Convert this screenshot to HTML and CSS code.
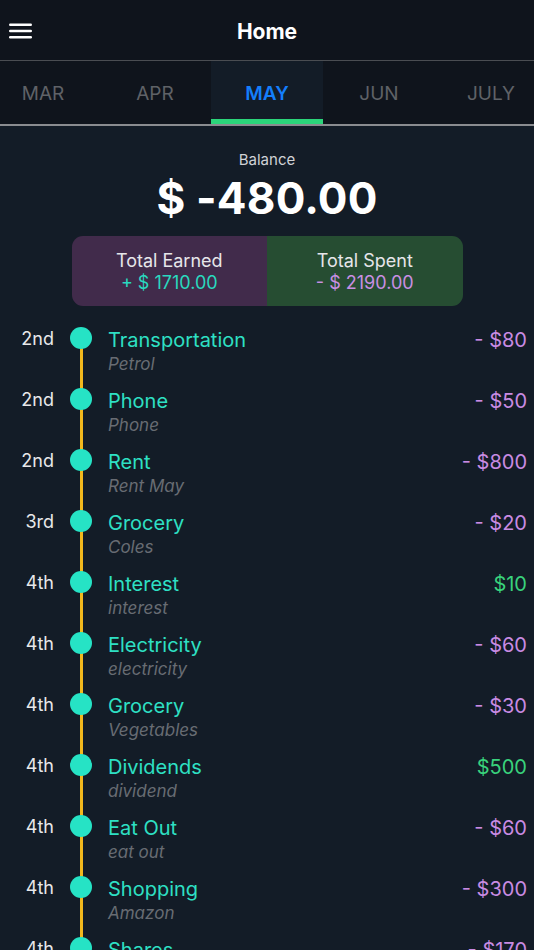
FILE: index.html
```html
<!DOCTYPE html>
<html>
<head>
<meta charset="utf-8">
<link rel="stylesheet" href="styles.css">
</head>
<body>
<div class="app">
  <header class="topbar">
    <svg class="menu" width="24" height="18" viewBox="0 0 24 18"><rect x="0" y="1.5" width="23" height="2.4" rx="1.2" fill="#fff"/><rect x="0" y="7.8" width="23" height="2.4" rx="1.2" fill="#fff"/><rect x="0" y="14.1" width="23" height="2.4" rx="1.2" fill="#fff"/></svg>
    <div class="title">Home</div>
  </header>
  <nav class="tabs">
    <div class="tab">MAR</div>
    <div class="tab">APR</div>
    <div class="tab active">MAY</div>
    <div class="tab">JUN</div>
    <div class="tab">JULY</div>
  </nav>
  <section class="summary">
    <div class="bal-label">Balance</div>
    <div class="bal-value">$ -480.00</div>
    <div class="totals">
      <div class="tot earned"><div class="tot-label">Total Earned</div><div class="tot-val">+ $ 1710.00</div></div>
      <div class="tot spent"><div class="tot-label">Total Spent</div><div class="tot-val">- $ 2190.00</div></div>
    </div>
  </section>
  <ul class="list">
    <li class="row first"><span class="date">2nd</span><span class="mark"><i></i></span><div class="info"><div class="name">Transportation</div><div class="sub">Petrol</div></div><span class="amt out">- $80</span></li>
    <li class="row"><span class="date">2nd</span><span class="mark"><i></i></span><div class="info"><div class="name">Phone</div><div class="sub">Phone</div></div><span class="amt out">- $50</span></li>
    <li class="row"><span class="date">2nd</span><span class="mark"><i></i></span><div class="info"><div class="name">Rent</div><div class="sub">Rent May</div></div><span class="amt out">- $800</span></li>
    <li class="row"><span class="date">3rd</span><span class="mark"><i></i></span><div class="info"><div class="name">Grocery</div><div class="sub">Coles</div></div><span class="amt out">- $20</span></li>
    <li class="row"><span class="date">4th</span><span class="mark"><i></i></span><div class="info"><div class="name">Interest</div><div class="sub">interest</div></div><span class="amt in">$10</span></li>
    <li class="row"><span class="date">4th</span><span class="mark"><i></i></span><div class="info"><div class="name">Electricity</div><div class="sub">electricity</div></div><span class="amt out">- $60</span></li>
    <li class="row"><span class="date">4th</span><span class="mark"><i></i></span><div class="info"><div class="name">Grocery</div><div class="sub">Vegetables</div></div><span class="amt out">- $30</span></li>
    <li class="row"><span class="date">4th</span><span class="mark"><i></i></span><div class="info"><div class="name">Dividends</div><div class="sub">dividend</div></div><span class="amt in">$500</span></li>
    <li class="row"><span class="date">4th</span><span class="mark"><i></i></span><div class="info"><div class="name">Eat Out</div><div class="sub">eat out</div></div><span class="amt out">- $60</span></li>
    <li class="row"><span class="date">4th</span><span class="mark"><i></i></span><div class="info"><div class="name">Shopping</div><div class="sub">Amazon</div></div><span class="amt out">- $300</span></li>
    <li class="row"><span class="date">4th</span><span class="mark"><i></i></span><div class="info"><div class="name">Shares</div><div class="sub">shares</div></div><span class="amt out">- $170</span></li>
  </ul>
</div>
</body>
</html>
```
FILE: styles.css
```css
* { box-sizing: border-box; margin: 0; padding: 0; }
html, body { background: #131c27; }
body { font-family: Inter, "Noto Sans", sans-serif; color: #fff; width: 534px; height: 950px; overflow: hidden; }
.app { width: 534px; }
.topbar { height: 61px; background: #0f141c; border-bottom: 1px solid #4a4d52; display: flex; align-items: center; justify-content: center; position: relative; }
.menu { position: absolute; left: 9px; top: 22px; }
.title { font-size: 21px; font-weight: 700; color: #fff; letter-spacing: 0; margin-top: 2px; }
.tabs { height: 65px; background: #0f141c; border-bottom: 2px solid #8a8c90; display: flex; justify-content: center; overflow: hidden; }
.tab { flex: 0 0 112px; height: 63px; display: flex; align-items: center; justify-content: center; font-size: 19px; color: #5f6267; padding-top: 1px; }
.tab.active { background: #131c27; color: #147efb; font-weight: 600; border-bottom: 5px solid #2bd57a; padding-top: 6px; height: 63px; }
.summary { display: flex; flex-direction: column; align-items: center; padding-top: 25px; }
.bal-label { font-size: 15px; color: #d0d2d6; line-height: 18px; }
.bal-value { font-size: 44px; font-weight: 700; line-height: 54px; margin-top: 2px; letter-spacing: 0.2px; }
.totals { display: flex; width: 391px; height: 70px; border-radius: 11px; overflow: hidden; margin-top: 11px; }
.tot { flex: 1; display: flex; flex-direction: column; align-items: center; justify-content: center; padding-top: 1px; }
.earned { background: #412b4b; }
.spent { background: #264d32; }
.tot-label { font-size: 18px; color: #e6e6ea; line-height: 22px; }
.tot-val { font-size: 18px; line-height: 22px; }
.earned .tot-val { color: #29d9bf; }
.spent .tot-val { color: #c98fe3; }
.list { list-style: none; margin-top: 21px; }
.row { display: flex; height: 61px; align-items: flex-start; }
.date { width: 54px; text-align: right; font-size: 18px; color: #e8e8ea; line-height: 24px; }
.mark { width: 54px; align-self: stretch; position: relative; display: flex; justify-content: center; }
.mark::before { content: ""; position: absolute; left: 25.5px; width: 3px; top: 0; bottom: 0; background: #f2b81d; }
.row.first .mark::before { top: 11px; }
.mark i { position: relative; display: block; width: 22px; height: 22px; border-radius: 50%; background: #26e3c5; }
.info { flex: 1; padding-top: 1px; }
.name { font-size: 20px; line-height: 25px; color: #2ee0c4; }
.sub { font-size: 17px; line-height: 22px; color: #686c73; font-style: italic; }
.amt { font-size: 20px; line-height: 25px; padding-right: 7px; padding-top: 1px; }
.amt.out { color: #c98be3; }
.amt.in { color: #39d27c; }
```
